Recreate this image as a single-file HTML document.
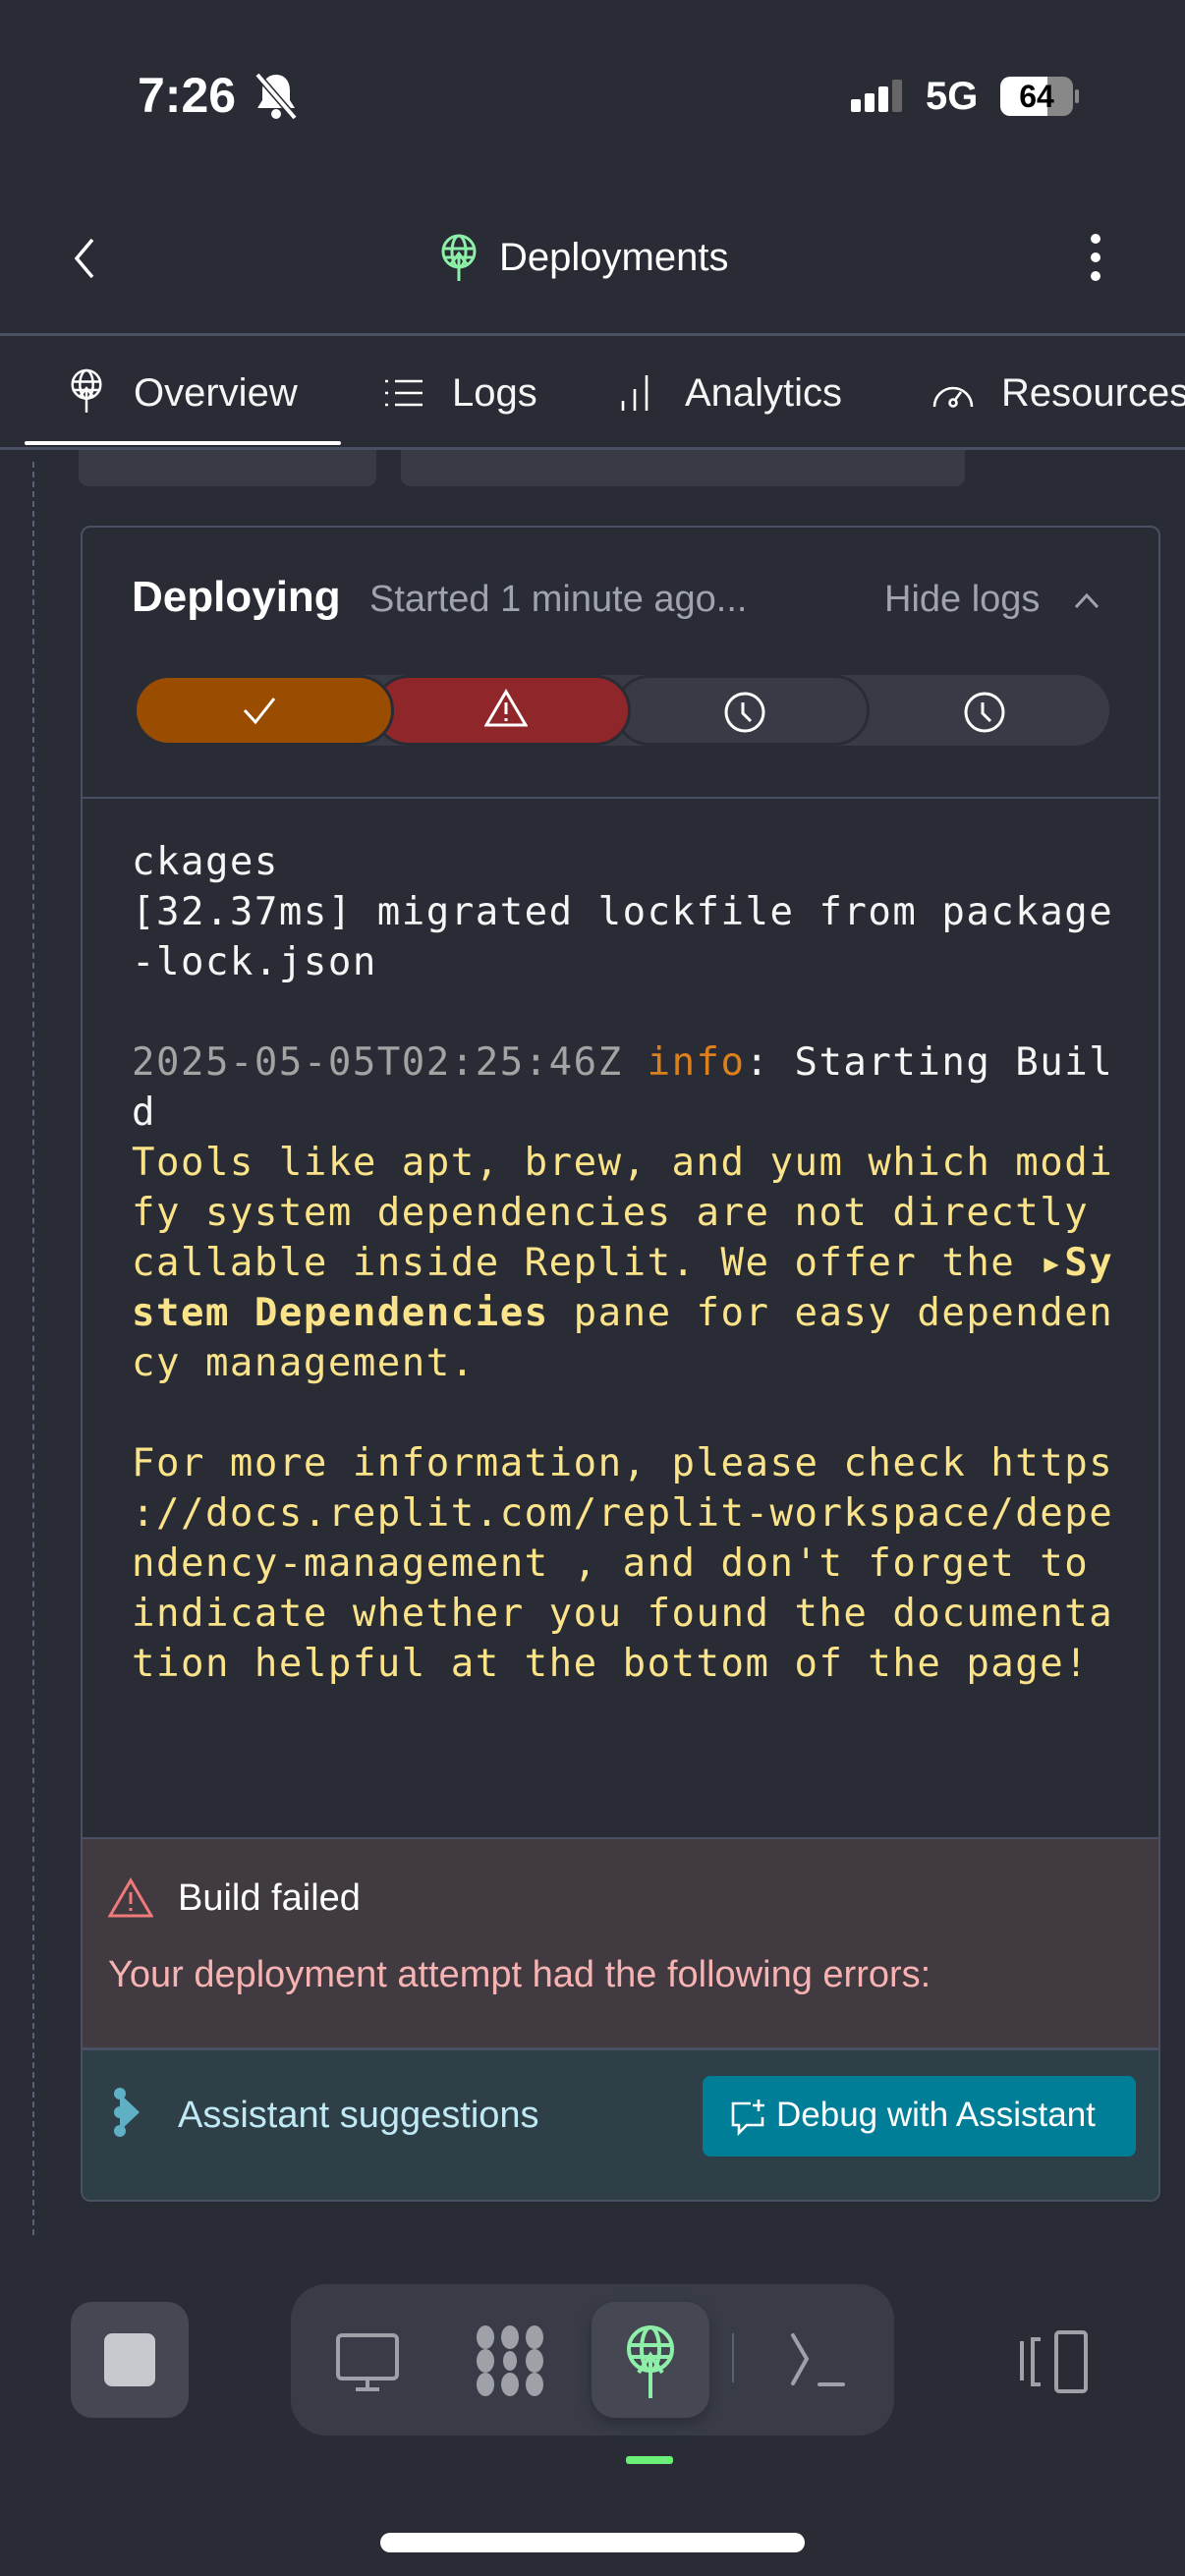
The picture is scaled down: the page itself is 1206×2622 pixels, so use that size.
<!DOCTYPE html>
<html><head><meta charset="utf-8"><style>
*{box-sizing:border-box;margin:0;padding:0}
body{width:1206px;height:2622px;background:#292c35;color:#f5f5f5;font-family:"Liberation Sans",sans-serif;position:relative;overflow:hidden}
.a{position:absolute}
.mono{font-family:"DejaVu Sans Mono","Liberation Mono",monospace;font-size:39px;white-space:pre;line-height:51px;letter-spacing:1.5px}
.y{color:#fbe38a}
</style></head><body>
<!-- status bar -->
<div class="a" style="left:140px;top:68px;font-size:50px;font-weight:bold;color:#fff">7:26</div>
<svg class="a" style="left:258px;top:72px" width="46" height="52" viewBox="0 0 46 52"><path d="M23 4c-9 0-14 7-14 16v10l-5 8h38l-5-8V20c0-9-5-16-14-16z" fill="#fff"/><circle cx="23" cy="44" r="5" fill="#fff"/><path d="M4 4l38 44" stroke="#292c35" stroke-width="7"/><path d="M4 4l38 44" stroke="#fff" stroke-width="4"/></svg>
<div class="a" style="left:866px;top:101px;width:10px;height:13px;background:#fff;border-radius:2px"></div>
<div class="a" style="left:880px;top:95px;width:10px;height:19px;background:#fff;border-radius:2px"></div>
<div class="a" style="left:894px;top:88px;width:10px;height:26px;background:#fff;border-radius:2px"></div>
<div class="a" style="left:908px;top:81px;width:10px;height:33px;background:#666;border-radius:2px"></div>
<div class="a" style="left:942px;top:76px;font-size:40px;font-weight:bold;color:#fff">5G</div>
<div class="a" style="left:1018px;top:78px;width:74px;height:40px;border-radius:10px;background:linear-gradient(90deg,#fff 0,#fff 65%,#888 65%);color:#000;font-size:32px;font-weight:bold;text-align:center;line-height:40px">64</div>
<div class="a" style="left:1094px;top:91px;width:4px;height:14px;background:#888;border-radius:2px"></div>
<!-- header -->
<svg class="a" style="left:70px;top:240px" width="30" height="46"><path d="M24 4L8 23l16 19" fill="none" stroke="#fff" stroke-width="3.5"/></svg>
<svg class="a" style="left:446px;top:238px" width="42" height="50" viewBox="0 0 42 50"><g fill="none" stroke="#8ef0a8" stroke-width="3"><circle cx="21" cy="18" r="16"/><ellipse cx="21" cy="18" rx="7" ry="16"/><path d="M5 15h32M5 24h32M21 48V20M12 32l9-12 9 12"/></g></svg>
<div class="a" style="left:508px;top:240px;font-size:40px;color:#fff">Deployments</div>
<div class="a" style="left:1110px;top:238px;width:10px;height:10px;border-radius:50%;background:#fff"></div>
<div class="a" style="left:1110px;top:257px;width:10px;height:10px;border-radius:50%;background:#fff"></div>
<div class="a" style="left:1110px;top:276px;width:10px;height:10px;border-radius:50%;background:#fff"></div>
<div class="a" style="left:0;top:339px;width:1206px;height:3px;background:#4a5063"></div>
<!-- tabs -->
<svg class="a" style="left:68px;top:372px" width="40" height="52" viewBox="0 0 42 50"><g fill="none" stroke="#fff" stroke-width="2.6"><circle cx="21" cy="18" r="15"/><ellipse cx="21" cy="18" rx="7" ry="15"/><path d="M6 15h30M6 24h30M21 48V22M13 32l8-10 8 10"/></g></svg>
<div class="a" style="left:136px;top:378px;font-size:40px">Overview</div>
<svg class="a" style="left:390px;top:384px" width="42" height="32"><g stroke="#fff" stroke-width="2.6"><path d="M2 4h3M2 16h3M2 28h3M12 4h28M12 16h28M12 28h28"/></g></svg>
<div class="a" style="left:460px;top:378px;font-size:40px">Logs</div>
<svg class="a" style="left:630px;top:380px" width="32" height="40"><g stroke="#fff" stroke-width="2.6"><path d="M4 38v-10M16 38V16M28 38V2"/></g></svg>
<div class="a" style="left:697px;top:378px;font-size:40px">Analytics</div>
<svg class="a" style="left:948px;top:384px" width="44" height="32"><g fill="none" stroke="#fff" stroke-width="2.6"><path d="M3 30A19 19 0 0 1 41 30"/><circle cx="22" cy="26" r="3.5"/><path d="M24 23l6-8"/></g></svg>
<div class="a" style="left:1019px;top:378px;font-size:40px;white-space:nowrap">Resources</div>
<div class="a" style="left:0;top:455px;width:1206px;height:3px;background:#4a5063"></div>
<div class="a" style="left:25px;top:449px;width:322px;height:4px;background:#fff;border-radius:2px"></div>
<div class="a" style="left:80px;top:458px;width:303px;height:37px;background:#383b46;border-radius:0 0 10px 10px"></div>
<div class="a" style="left:408px;top:458px;width:574px;height:37px;background:#383b46;border-radius:0 0 10px 10px"></div>
<!-- dashed -->
<div class="a" style="left:33px;top:470px;width:0;height:1805px;border-left:2px dashed #5a6075"></div>
<!-- card -->
<div class="a" style="left:82px;top:535px;width:1099px;height:1706px;border:2px solid #4a5063;border-radius:10px;overflow:hidden">
 <div class="a" style="left:50px;top:46px;font-size:44px;font-weight:bold;color:#fff">Deploying</div>
 <div class="a" style="left:292px;top:52px;font-size:38px;color:#a0a3ab">Started 1 minute ago...</div>
 <div class="a" style="left:816px;top:52px;font-size:38px;color:#a0a3ab">Hide logs</div>
 <svg class="a" style="left:1008px;top:64px" width="28" height="20"><path d="M3 17l11-12 11 12" fill="none" stroke="#a0a3ab" stroke-width="3"/></svg>
 <div class="a" style="left:52px;top:150px;width:993px;height:72px;background:#383b46;border-radius:36px"></div>
 <div class="a" style="left:541px;top:150px;width:260px;height:72px;background:#383b46;border-radius:36px;border:3px solid #292c35"></div>
 <div class="a" style="left:296px;top:150px;width:262px;height:72px;background:#8f2629;border-radius:36px;border:3px solid #292c35"></div>
 <div class="a" style="left:52px;top:150px;width:265px;height:72px;background:#9a4d00;border-radius:36px;border:3px solid #292c35"></div>
 <svg class="a" style="left:162px;top:170px" width="36" height="32"><path d="M3 16l11 12L33 4" fill="none" stroke="#fff" stroke-width="3"/></svg>
 <svg class="a" style="left:409px;top:164px" width="44" height="40"><g fill="none" stroke="#fff" stroke-width="3"><path d="M22 3L2 37h40z"/><path d="M22 14v12M22 30v3"/></g></svg>
 <svg class="a" style="left:652px;top:166px" width="44" height="44"><g fill="none" stroke="#fff" stroke-width="3"><circle cx="22" cy="22" r="19"/><path d="M20 12v11l8 8"/></g></svg>
 <svg class="a" style="left:896px;top:166px" width="44" height="44"><g fill="none" stroke="#fff" stroke-width="3"><circle cx="22" cy="22" r="19"/><path d="M20 12v11l8 8"/></g></svg>
 <div class="a" style="left:0;top:274px;width:1099px;height:2px;background:#4a5063"></div>
 <div class="a mono" style="left:50px;top:315px">ckages
[32.37ms] migrated lockfile from package
-lock.json

<span style="color:#a3a3a3">2025-05-05T02:25:46Z</span> <span style="color:#dc7f1d">info</span>: Starting Buil
d
<span class="y">Tools like apt, brew, and yum which modi
fy system dependencies are not directly
callable inside Replit. We offer the <b>&#x25B8;Sy
stem Dependencies</b> pane for easy dependen
cy management.

For more information, please check https
://docs.replit.com/replit-workspace/depe
ndency-management , and don't forget to
indicate whether you found the documenta
tion helpful at the bottom of the page!</span></div>
 <div class="a" style="left:0;top:1333px;width:1099px;height:214px;background:#413a40;border-top:2px solid #4a5063"></div>
 <svg class="a" style="left:26px;top:1374px" width="46" height="42"><g fill="none" stroke="#f07a7a" stroke-width="3"><path d="M23 3L2 39h42z"/><path d="M23 15v12M23 31v3"/></g></svg>
 <div class="a" style="left:97px;top:1374px;font-size:38px;color:#fff">Build failed</div>
 <div class="a" style="left:26px;top:1452px;font-size:38px;color:#f7b2b2">Your deployment attempt had the following errors:</div>
 <div class="a" style="left:0;top:1547px;width:1099px;height:160px;background:#2f3f48;border-top:3px solid #4a5063"></div>
 <svg class="a" style="left:30px;top:1585px" width="34" height="56"><g fill="#5fb0c4"><circle cx="8" cy="9" r="6"/><circle cx="8" cy="28" r="6"/><circle cx="8" cy="47" r="6"/><path d="M8 9l20 19-20 19z"/></g></svg>
 <div class="a" style="left:97px;top:1595px;font-size:38px;color:#bfeaf5">Assistant suggestions</div>
 <div class="a" style="left:631px;top:1576px;width:441px;height:82px;background:#007e98;border-radius:8px"></div>
 <svg class="a" style="left:658px;top:1598px" width="40" height="40"><g fill="none" stroke="#fff" stroke-width="2.6"><path d="M22 6H4v22h6v8l8-8h16V20"/><path d="M30 2v12M24 8h12"/></g></svg>
 <div class="a" style="left:706px;top:1596px;font-size:35px;color:#fff">Debug with Assistant</div>
</div>
<!-- bottom bar -->
<div class="a" style="left:72px;top:2343px;width:120px;height:118px;background:#454852;border-radius:22px"></div>
<div class="a" style="left:106px;top:2375px;width:52px;height:54px;background:#c6c9cd;border-radius:8px"></div>
<div class="a" style="left:296px;top:2325px;width:614px;height:154px;background:#393c46;border-radius:36px"></div>
<div class="a" style="left:602px;top:2343px;width:120px;height:118px;background:#454852;border-radius:24px;box-shadow:0 6px 14px rgba(0,0,0,.25)"></div>
<svg class="a" style="left:341px;top:2374px" width="66" height="62"><g fill="none" stroke="#9ea1a7" stroke-width="4"><rect x="3" y="3" width="60" height="44" rx="4"/><path d="M33 47v9M21 58h24"/></g></svg>
<svg class="a" style="left:483px;top:2367px" width="72" height="72" viewBox="0 0 72 72"><g fill="#9ea1a7"><ellipse cx="11" cy="12" rx="9" ry="12"/><ellipse cx="36" cy="12" rx="9" ry="12"/><ellipse cx="61" cy="12" rx="9" ry="12"/><ellipse cx="11" cy="36" rx="9" ry="12"/><ellipse cx="36" cy="36" rx="7" ry="10"/><ellipse cx="61" cy="36" rx="9" ry="12"/><ellipse cx="11" cy="60" rx="9" ry="12"/><ellipse cx="36" cy="60" rx="9" ry="12"/><ellipse cx="61" cy="60" rx="9" ry="12"/></g></svg>
<svg class="a" style="left:634px;top:2367px" width="56" height="74" viewBox="0 0 56 74"><g fill="none" stroke="#8ef0a8" stroke-width="4"><circle cx="28" cy="24" r="22"/><ellipse cx="28" cy="24" rx="9" ry="22"/><path d="M6 20h44M6 32h44M28 74V30M16 48l12-18 12 18"/></g></svg>
<div class="a" style="left:745px;top:2375px;width:2px;height:50px;background:#5a6075"></div>
<svg class="a" style="left:803px;top:2374px" width="60" height="58"><g fill="none" stroke="#9ea1a7" stroke-width="4" stroke-linecap="round"><path d="M4 3l14 24L4 52"/><path d="M31 53h24"/></g></svg>
<svg class="a" style="left:1037px;top:2371px" width="72" height="66"><g fill="none" stroke="#9ea1a7" stroke-width="4"><path d="M3 12v40M22 10h-8v46h8"/><rect x="38" y="3" width="30" height="60" rx="3"/></g></svg>
<div class="a" style="left:637px;top:2500px;width:48px;height:8px;background:#6bf07a;border-radius:3px"></div>
<div class="a" style="left:387px;top:2578px;width:432px;height:20px;background:#fff;border-radius:10px"></div>
</body></html>
